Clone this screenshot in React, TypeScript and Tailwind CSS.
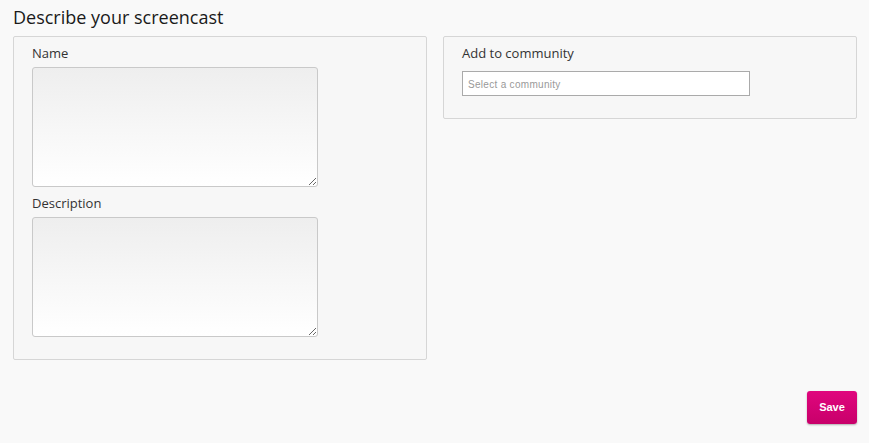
export default function App() {
  return (
    <div className="min-h-[443px] bg-[#f9f9f9] px-[13px] pr-[12px] font-['Open_Sans',sans-serif] text-[#333]">
      <h1 className="pt-[4px] text-[18px] leading-[26px] text-[#1a1a1a]">Describe your screencast</h1>
      <div className="mt-[6px] grid grid-cols-2 items-start gap-[16px]">
        <div className="rounded-[2px] border border-[#d6d6d6] bg-[#f7f7f7] px-[18px] pt-[7px] pb-[22px]">
          <label className="block text-[13px] leading-[18px] text-[#333]">Name</label>
          <textarea className="mt-[5px] block h-[120px] w-[286px] rounded-[3px] border border-[#c9c9c9] bg-gradient-to-b from-[#eeeeee] to-white outline-none" />
          <label className="mt-[7px] block text-[13px] leading-[18px] text-[#333]">Description</label>
          <textarea className="mt-[5px] block h-[120px] w-[286px] rounded-[3px] border border-[#c9c9c9] bg-gradient-to-b from-[#eeeeee] to-white outline-none" />
        </div>
        <div className="rounded-[2px] border border-[#d6d6d6] bg-[#f7f7f7] px-[18px] pt-[7px] pb-[22px]">
          <label className="block text-[13px] leading-[18px] text-[#333]">Add to community</label>
          <input
            placeholder="Select a community"
            className="mt-[9px] block h-[25px] w-[288px] border border-[#aaaaaa] bg-white px-[5px] pt-[2px] font-['Liberation_Sans',sans-serif] text-[10px] tracking-[0.3px] placeholder:text-[#999] outline-none"
          />
        </div>
      </div>
      <div className="mt-[31px] flex justify-end">
        <button className="h-[33px] w-[50px] rounded-[3px] bg-gradient-to-b from-[#e0067e] to-[#c8006a] font-['Liberation_Sans',sans-serif] text-[11px] font-bold text-white shadow-[0_1px_2px_rgba(0,0,0,0.3)]">
          Save
        </button>
      </div>
    </div>
  );
}
